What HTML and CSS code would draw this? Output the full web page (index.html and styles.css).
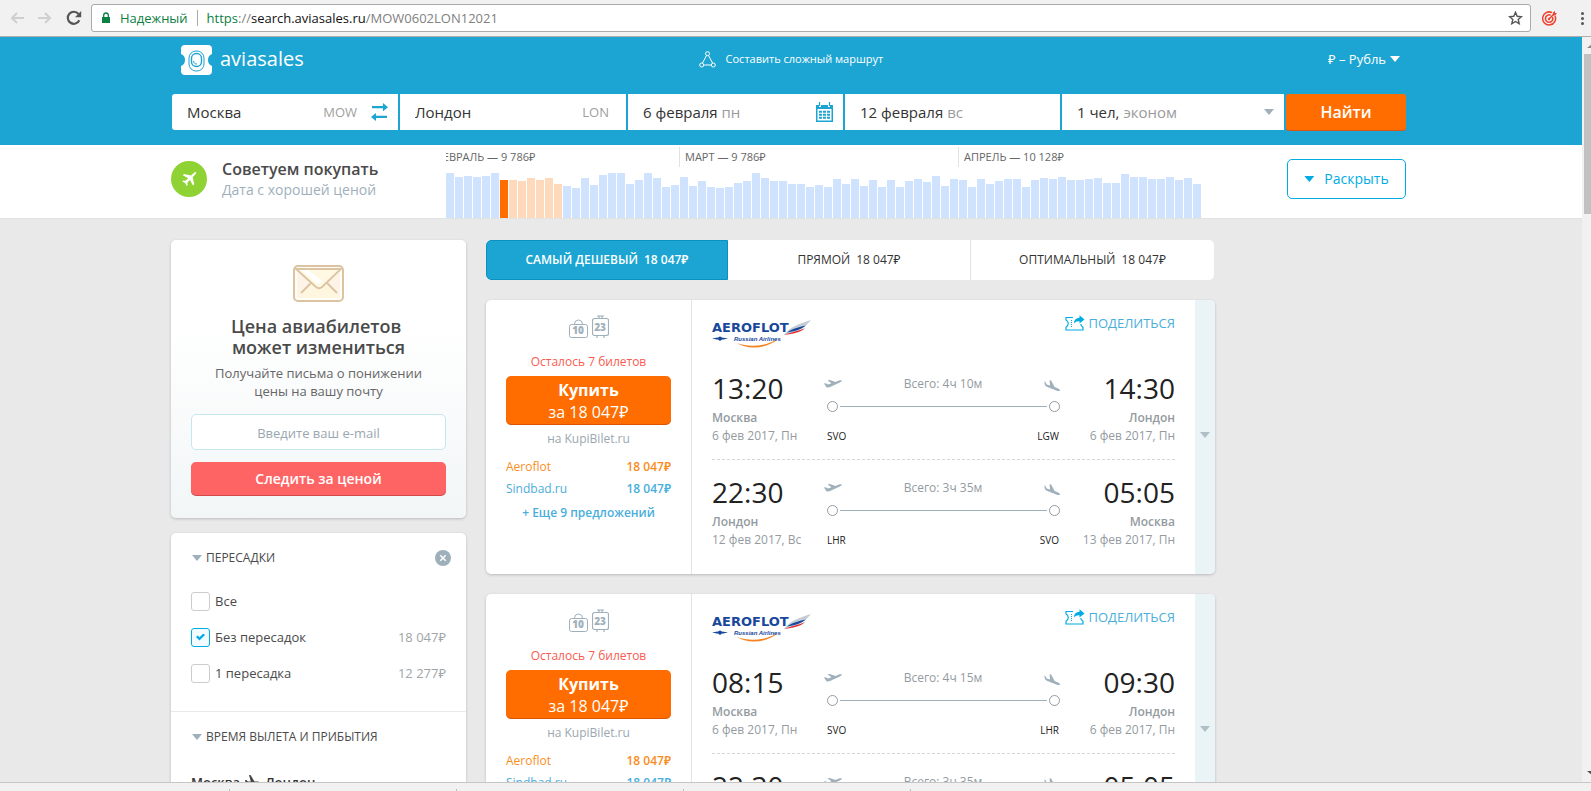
FILE: index.html
```html
<!DOCTYPE html>
<html lang="ru">
<head>
<meta charset="utf-8">
<title>Aviasales — Москва – Лондон</title>
<link rel="stylesheet" href="styles.css">
</head>
<body>
<svg class="sprite" aria-hidden="true">
  <symbol id="takeoff" viewBox="0 0 18 9"><path d="M0 3.500l1.500-.3 2.700 1.300 3.300-1.200L3.600.6 5.600 0l6 1.900 3.300-1.300c1.500-.6 3-.5 3.100.1.100.6-.9 1.200-2.200 1.700L5.500 7.200 2.600 7.500z"/></symbol>
  <symbol id="landing" viewBox="0 0 16 12"><path d="M.3 1.500l1.100.4 1.300 2.500 3.300 1.200L5.600 0l1.700.7 3.300 6.300 3 1.200c1.500.6 2.500 1.500 2.300 2.200-.2.700-1.600.7-2.900.3L2.800 6.700 1 5.200z"/></symbol>
  <symbol id="share" viewBox="0 0 20 16"><path d="M8 2.500H1V5c3 1.500 3 5.500 0 7.200V15h17v-2.800c-1.500-.8-2.200-2-2.200-3.200" fill="none" stroke="#00ace2" stroke-width="1.200"/><path d="M6.500 5v8" stroke="#00ace2" stroke-dasharray="1 1"/><path d="M9 8.500C9 5 11.300 3 14.500 2.800V.3l5 4.200-5 4.100V6.200C12 6 10.300 6.800 9 8.500z" fill="#00ace2"/></symbol>
  <symbol id="bag" viewBox="0 0 19 19"><path d="M2.500 5.500h14a2 2 0 0 1 2 2v9a2 2 0 0 1-2 2h-14a2 2 0 0 1-2-2v-9a2 2 0 0 1 2-2zM5.500 5a4 4 0 0 1 8 0" fill="none" stroke="#9fb0bb"/></symbol>
  <symbol id="case" viewBox="0 0 17 23"><path d="M2.500 3.500h12a2 2 0 0 1 2 2v13a2 2 0 0 1-2 2h-12a2 2 0 0 1-2-2v-13a2 2 0 0 1 2-2zM7 3V1M10 3V1M5 1h7M5 21v2M12 21v2" fill="none" stroke="#9fb0bb" stroke-width="1.200"/></symbol>
  <symbol id="wing" viewBox="0 0 100 28"><path d="M72 15C78 7 86 4 99 0 92 9 84 12 72 15z" fill="#c3ccd6"/><path d="M75 12.500C81 8 88 7 94 5.500c-5 4-12 6-19 7z" fill="#17489b"/><path d="M72 15c7-3 13-3.500 21-7-5 5-12 5.500-21 7z" fill="#e0292e"/><path d="M0 18c5 0 6-.5 8-1.500 2 1 3 1.500 8 1.500-3 1-4 1.500-6 1.500L8 21l-2-1.500C4 19.500 3 19 0 18z" fill="#17489b"/><path d="M25 23c13 5 29 3 41-4-11 10-31 11-41 4z" fill="#f58220"/></symbol>
</svg>

<header class="browser">
  <button class="nav" aria-label="Назад"><svg width="14" height="12" viewBox="0 0 14 12"><path d="M14 6H2M7 1L2 6l5 5" fill="none" stroke="#cfcfcf" stroke-width="2"/></svg></button>
  <button class="nav" aria-label="Вперёд"><svg width="14" height="12" viewBox="0 0 14 12"><path d="M0 6h12M7 1l5 5-5 5" fill="none" stroke="#cfcfcf" stroke-width="2"/></svg></button>
  <button class="nav" aria-label="Обновить"><svg width="16" height="16" viewBox="0 0 16 16"><path d="M13.300 10.200a6 6 0 1 1-.8-6.200" fill="none" stroke="#555" stroke-width="2.200"/><path d="M15.200 1v6.200H9z" fill="#555"/></svg></button>
  <div class="address">
    <svg width="8" height="12" viewBox="0 0 8 12"><path d="M0 5h8v6H0z" fill="#0b8043"/><path d="M1.700 5V3.300a2.300 2.300 0 0 1 4.600 0V5" fill="none" stroke="#0b8043" stroke-width="1.300"/></svg>
    <span class="secure">Надежный</span>
    <span class="url"><span class="scheme">https</span>://<b>search.aviasales.ru</b>/MOW0602LON12021</span>
    <button class="star" aria-label="Добавить в закладки"><svg width="15" height="14" viewBox="0 0 15 14"><path d="M7.500 1.300l1.700 4 4.300.4-3.300 2.800 1 4.200-3.700-2.200-3.700 2.200 1-4.200L1.500 5.700l4.300-.4z" fill="none" stroke="#555" stroke-width="1.400"/></svg></button>
  </div>
  <svg class="ext" width="15" height="15" viewBox="0 0 15 15"><g fill="none" stroke="#f0402f" stroke-width="1.500"><path d="M13 4.700A6.500 6.500 0 1 1 10 1.600"/><path d="M10.500 6A3.700 3.700 0 1 1 8.700 4.200M7 8l5-5"/></g><path d="M11 1.500L13 0v2l2 .3-2 2.200-2.300-.3z" fill="#f0402f"/><circle cx="7" cy="8" r="1.200" fill="#f0402f"/></svg>
  <button class="kebab" aria-label="Меню"><i></i><i></i><i></i></button>
</header>

<div class="window">
  <div class="page">
    <div class="top">
      <div class="topline">
        <a class="logo" href="#"><svg width="31" height="30" viewBox="0 0 31 30"><path d="M4 0h23a4 4 0 0 1 4 4v5a6.500 6.500 0 0 0 0 12v5a4 4 0 0 1-4 4H4a4 4 0 0 1-4-4v-5A6.500 6.500 0 0 0 0 9V4a4 4 0 0 1 4-4z" fill="#fff"/><rect x="8" y="6" width="15" height="20" rx="7" fill="none" stroke="#1ca5d2"/><rect x="10.500" y="8.500" width="10" height="13" rx="4.800" fill="none" stroke="#1ca5d2" stroke-width="1.400"/><path d="M12.500 16c.3 2 1.500 3 3.500 3" fill="none" stroke="#1ca5d2"/></svg><span>aviasales</span></a>
        <a class="complex" href="#"><svg width="17" height="17" viewBox="0 0 17 17" fill="none" stroke="#fff"><circle cx="8.500" cy="2.700" r="2"/><circle cx="2.700" cy="14" r="2"/><circle cx="14.300" cy="14" r="2"/><path d="M7.500 4.500l-4 7.500M9.500 4.500l4 7.500M4.700 14h7.600"/></svg>Составить сложный маршрут</a>
        <div class="currency"><select aria-label="Валюта"><option>₽ – Рубль</option></select><i class="caret"></i></div>
      </div>
      <form class="search">
        <div class="field"><input type="text" value="Москва" aria-label="Откуда"><span class="code">MOW</span><button type="button" class="swap" aria-label="Поменять местами"><svg width="17" height="18" viewBox="0 0 17 18" fill="#1ca5d2"><path d="M1 3h11V0l5 4.200-5 4V5.300H1zM16 12.700H5V10L0 14l5 4v-3h11z"/></svg></button></div>
        <div class="field"><input type="text" value="Лондон" aria-label="Куда"><span class="code">LON</span></div>
        <button type="button" class="field">6 февраля <span class="muted">пн</span><svg class="right" width="17" height="20" viewBox="0 0 17 20"><path d="M0 3h3v2h2V3h7v2h2V3h3v17H0z" fill="#1ca5d2"/><path d="M1.500 7h14v11.500h-14z" fill="#fff"/><path d="M3.500 0v4M13.500 0v4" stroke="#1ca5d2" stroke-width="1.200"/><path d="M3 9.700h11M3 12.700h11M3 15.700h11" stroke="#1ca5d2" stroke-width="2" stroke-dasharray="3 1"/></svg></button>
        <button type="button" class="field">12 февраля <span class="muted">вс</span></button>
        <button type="button" class="field">1 чел, <span class="muted">эконом</span><i class="caret grey right"></i></button>
        <button type="submit" class="find">Найти</button>
      </form>
    </div>

    <section class="prices">
      <div class="advice">
        <svg width="36" height="36" viewBox="0 0 36 36"><circle cx="18" cy="18" r="18" fill="#8fd233"/><path d="M23.700 11.200c1-.7 2 .4 1.300 1.300l-3.300 3.700 1.500 7-1.200 1.200-3-5.400-2.600 2.600.3 2.400-1 1-1.500-3-3-1.500 1-1 2.400.3 2.600-2.600-5.400-3 1.200-1.200 7 1.500z" fill="#fff"/></svg>
        <p><strong>Советуем покупать</strong><span>Дата с хорошей ценой</span></p>
      </div>
      <div class="chart">
        <div class="months"><span class="feb">ФЕВРАЛЬ — 9&nbsp;786₽</span><span class="mar">МАРТ — 9&nbsp;786₽</span><span class="apr">АПРЕЛЬ — 10&nbsp;128₽</span></div>
        <div class="bars" id="bars"></div>
      </div>
      <button class="expand"><i class="caret"></i>Раскрыть</button>
    </section>

    <div class="content">
      <aside>
        <form class="card subscribe">
          <svg width="51" height="38" viewBox="0 0 51 38"><rect x="1" y="1" width="49" height="35" rx="4" fill="#fffdf8" stroke="#dcc3a1" stroke-width="2"/><path d="M4 33V7l14 11zM47 33V7L33 18z" fill="#fdf3e6"/><path d="M4 33l14-14 8 5 8-5 13 14z" fill="#fff6df"/><path d="M8 28L18 18M44 28L34 18" stroke="#dcc3a1" stroke-width="1.800"/><path d="M3 4l20 18q3 2.500 6 0L48 4z" fill="#fff8e3" stroke="#dcc3a1" stroke-width="1.800"/><path d="M8 5l17 14 4-3L15 5z" fill="#fff"/></svg>
          <h2>Цена авиабилетов&nbsp;<br>может измениться</h2>
          <p>Получайте письма о понижении<br>цены на вашу почту</p>
          <input type="email" placeholder="Введите ваш e-mail" aria-label="E-mail">
          <button type="submit">Следить за ценой</button>
        </form>
        <section class="card filters">
          <fieldset aria-labelledby="stops">
            <div class="ftitle"><i class="caret grey"></i><span id="stops">ПЕРЕСАДКИ</span><button type="button" class="clear" aria-label="Сбросить"><svg width="16" height="16" viewBox="0 0 16 16"><circle cx="8" cy="8" r="8" fill="#9fb0bb"/><path d="M5.300 5.300l5.400 5.400M10.700 5.300l-5.400 5.400" stroke="#fff" stroke-width="1.500"/></svg></button></div>
            <label><input type="checkbox">Все</label>
            <label><input type="checkbox" checked>Без пересадок<span>18&nbsp;047₽</span></label>
            <label><input type="checkbox">1 пересадка<span>12&nbsp;277₽</span></label>
          </fieldset>
          <div class="times">
            <div class="ftitle"><i class="caret grey"></i>ВРЕМЯ ВЫЛЕТА И ПРИБЫТИЯ</div>
            <h3>Москва <svg width="15" height="14" viewBox="0 0 15 14"><path d="M0 5h1.500l1.300 1.500h3L4 0h1.500l4 6.500H13a1.200 1 0 0 1 0 2H9.500L5.500 14H4l1.800-5.500h-3L1.500 9.500H0l.6-2z" fill="#444"/></svg> Лондон</h3>
          </div>
        </section>
      </aside>

      <main>
        <nav class="tabs">
          <button class="active">САМЫЙ ДЕШЕВЫЙ<span>18&nbsp;047₽</span></button>
          <button>ПРЯМОЙ<span>18&nbsp;047₽</span></button>
          <button>ОПТИМАЛЬНЫЙ<span>18&nbsp;047₽</span></button>
        </nav>
        <div id="tickets" class="tickets"></div>
      </main>
    </div>
  </div>
  <div class="scrollbar"><i class="up"></i><i class="thumb"></i><i class="down"></i></div>
</div>
<footer class="shelf"><i></i><i></i><i></i><i></i></footer>
<script src="app.js"></script>
</body>
</html>
```

FILE: styles.css
```css
* { box-sizing: border-box; }
body { margin: 0; height: 100vh; overflow: hidden; display: flex; flex-direction: column; background: #e9e9e9; color: #333; font: 12px/18px "Open Sans", "Noto Sans", sans-serif; }
button, input, select { font: inherit; color: inherit; border: 0; background: none; padding: 0; margin: 0; }
h2, h3, p, fieldset { margin: 0; padding: 0; border: 0; }
a { color: inherit; text-decoration: none; }
svg { display: block; flex: none; }
.sprite { position: absolute; width: 0; height: 0; }

.browser { display: flex; align-items: center; flex: none; height: 37px; padding: 0 0 0 10px; background: #f1f1f1; border-bottom: 1px solid #aeaeae; }
.nav { width: 28px; height: 28px; display: flex; align-items: center; }
.nav:nth-child(3) { width: 25px; }
.address { flex: 1; display: flex; align-items: center; height: 28px; padding: 0 7px 0 10px; background: #fff; border: 1px solid #aaa; border-radius: 3px; font-size: 13px; }
.secure { margin-left: 10px; padding-right: 9px; border-right: 1px solid #aaa; line-height: 16px; color: #0b8043; }
.url { margin-left: 9px; flex: 1; color: #808080; }
.url b { font-weight: 400; color: #111; }
.scheme { color: #0b8043; }
.ext { margin-left: 11px; }
.kebab { display: grid; gap: 2px; margin-left: 24px; width: 10px; }
.kebab i { width: 3px; height: 3px; border-radius: 50%; background: #555; }

.window { flex: 1; min-height: 0; display: flex; }
.page { flex: 1; min-width: 0; overflow: hidden; }
.scrollbar { width: 9px; display: flex; flex-direction: column; background: #f1f1f1; overflow: hidden; }
.scrollbar i { flex: none; margin-left: 2px; }
.scrollbar .up, .scrollbar .down { width: 10px; margin-left: 5px; border: 5px solid transparent; }
.scrollbar .up { margin-top: 7px; border-top: 0; border-bottom: 4px solid #8a8a8a; }
.scrollbar .down { margin-top: auto; margin-bottom: 7px; border-bottom: 0; border-top: 4px solid #505050; }
.thumb { height: 160px; margin-top: 6px; background: #c1c1c1; }
.shelf { flex: none; height: 9px; display: flex; align-items: flex-end; padding-left: 229px; background: #f1f1f1; border-top: 1px solid #c6c6c6; }
.shelf i { width: 227px; height: 2px; border-left: 1px solid #bbb; }

.caret { display: inline-block; flex: none; width: 10px; height: 6px; background: currentColor; clip-path: polygon(0 0, 100% 0, 50% 100%); }
.grey { color: #9fb0bb; }
.right { margin-left: auto; }

.top { height: 108px; padding: 0 176px 0 172px; background: #1ca5d2; color: #fff; }
.topline { height: 57px; display: flex; align-items: center; justify-content: space-between; padding: 0 6px 13px 9px; }
.logo { display: flex; align-items: center; gap: 8px; padding-top: 1px; font-size: 20px; line-height: 26px; }
.logo span { padding-bottom: 2px; }
.complex { display: flex; align-items: center; gap: 10px; margin-left: 286px; font-size: 11px; }
.currency { display: flex; align-items: center; gap: 4px; margin-left: 336px; font-size: 13px; }
.currency select { appearance: none; }
.search { display: grid; grid-template-columns: 226fr 226fr 215fr 215fr 222fr 120fr; gap: 2px; }
.field { min-width: 0; height: 36px; display: flex; align-items: center; padding: 0 10px 0 15px; background: #fff; color: #333; font-size: 15px; line-height: 20px; white-space: pre; text-align: left; }
.field:first-child { border-radius: 3px 0 0 3px; }
.field input { flex: 1; min-width: 0; outline: 0; }
.field:nth-child(2) { padding-right: 17px; }
.code { color: #a0a0a0; font-size: 13px; }
.swap { margin-left: 14px; }
.muted { color: #9b9b9b; }
.find { height: 36px; background: #ff6d00; border-radius: 3px; box-shadow: 0 1px 0 #d5581a; color: #fff; font-size: 16px; font-weight: 600; }

.prices { height: 74px; display: flex; align-items: flex-start; padding: 0 176px 0 171px; background: #fff; border-bottom: 1px solid #e2e3e3; }
.advice { flex: 0 0 275px; display: flex; gap: 15px; padding-top: 16px; }
.advice strong, .advice span { display: block; font-size: 16px; font-weight: 600; line-height: 20px; color: #4a4a4a; white-space: nowrap; }
.advice p { margin-top: -2px; }
.advice span { font-size: 14px; line-height: 22px; font-weight: 400; color: #a0b0bb; }
.chart { flex: 1; max-width: 755px; height: 73px; display: flex; flex-direction: column; justify-content: space-between; overflow: hidden; }
.months { display: flex; margin: 2px 0 0 -19px; font-size: 11px; line-height: 20px; color: #666; white-space: nowrap; }
.months span { flex: none; padding-left: 5px; }
.months .feb { width: 252px; padding-left: 7px; }
.months .mar { width: 279px; border-left: 1px solid #e2e2e2; }
.months .apr { border-left: 1px solid #e2e2e2; }
.bars { height: 45px; display: flex; align-items: flex-end; gap: 1px; }
.bars i { flex: 1; background: #cfe3ff; }
.bars .near { background: #ffd9bc; }
.bars .day { background: #ff6d00; }
.expand { flex: none; width: 119px; height: 40px; margin: 14px 0 0 auto; display: flex; align-items: center; justify-content: center; gap: 10px; border: 1px solid #00ace2; border-radius: 5px; color: #00ace2; font-size: 14px; }

.content { display: flex; align-items: flex-start; gap: 20px; padding: 21px 0 0 171px; }
aside { flex: none; width: 295px; display: grid; gap: 15px; }
.card { background: #fff; border-radius: 5px; box-shadow: 0 1px 3px rgba(0, 0, 0, .2); }
.subscribe { display: flex; flex-direction: column; align-items: center; padding: 25px 20px 22px; background: linear-gradient(#fff 30%, #f2f6f7); text-align: center; }
.subscribe h2 { margin-top: 13px; font-size: 18px; line-height: 21px; font-weight: 600; color: #4a4a4a; }
.subscribe p { margin-top: 6px; font-size: 13px; color: #666; }
.subscribe input { width: 100%; height: 36px; margin-top: 14px; padding-top: 1px; background: #fff; border: 1px solid #c5e7f2; border-radius: 5px; text-align: center; font-size: 13px; }
.subscribe input::placeholder { color: #9aa7b0; opacity: 1; }
.subscribe button { width: 100%; height: 33px; margin: 12px 0 1px; background: #ff6464; border-radius: 5px; box-shadow: 0 1px 0 #d04a4a; color: #fff; font-size: 14px; font-weight: 600; }
fieldset { min-width: 0; padding: 0 20px 20px; border-bottom: 1px solid #e8eaea; }
.ftitle { display: flex; align-items: center; gap: 4px; height: 50px; font-size: 12px; color: #4a4a4a; }
.ftitle .caret { margin-left: 1px; }
.clear { margin: 0 -5px 0 auto; }
.filters label { display: flex; align-items: center; height: 36px; font-size: 13px; color: #4a4a4a; }
.filters label span { margin-left: auto; color: #a0a5a8; }
.filters input { appearance: none; width: 19px; height: 19px; margin-right: 5px; background: #fff; border: 1px solid #ccc; border-radius: 3px; display: grid; place-items: center; }
.filters input:checked { background: #f2fbff; border-color: #00ace2; }
.filters input:checked::before { content: ""; width: 9px; height: 7px; background: #00ace2; clip-path: polygon(0 50%, 20% 30%, 38% 52%, 82% 0, 100% 20%, 38% 100%); }
.times { padding: 0 20px; }
.times h3 { display: flex; gap: 5px; padding: 9px 0 20px; font-size: 13px; line-height: 22px; font-weight: 600; }
.times h3 svg { margin-top: 4px; }

main { flex: 0 1 729px; }
.tabs { display: grid; grid-template-columns: 242fr 243fr 243fr; height: 40px; margin-right: 1px; background: #fff; border-radius: 5px; overflow: hidden; }
.tabs button { border-right: 1px solid #e2e2e2; font-size: 12px; }
.tabs button:last-child { border: 0; }
.tabs .active { background: #1ca5d2; border: 1px solid #0b90c0; border-radius: 5px 0 0 5px; color: #fff; font-weight: 600; }
.tabs span { margin-left: 6px; }
.tickets { display: grid; gap: 20px; margin-top: 20px; }
.ticket { display: flex; height: 274px; overflow: hidden; }
.buy { flex: 0 0 206px; display: flex; flex-direction: column; align-items: center; padding: 15px 20px 0; border-right: 1px solid #e2e5e6; }
.bags { display: flex; align-items: flex-end; gap: 4px; height: 23px; }
.bags span { display: grid; place-items: center; color: #9fb0bb; font-size: 10px; line-height: 13px; font-weight: 700; }
.bags svg, .bags b { grid-area: 1 / 1; }
.bags span:first-child b { padding-top: 4px; }
.bags span:last-child b { padding-top: 1px; }
.left { margin-top: 15px; color: #f95b50; }
.buy button { width: 165px; height: 48px; margin-top: 5px; padding-top: 1px; background: #ff6d00; border-radius: 5px; box-shadow: 0 1px 0 #dd5500; color: #fff; font-size: 16px; line-height: 22px; }
.buy button b, .buy button span { display: block; }
.agency { margin-top: 6px; color: #9aa7b0; }
.offer { width: 165px; display: flex; justify-content: space-between; line-height: 22px; color: #4aaedb; }
.offer b { font-weight: 600; }
.agency + .offer { margin-top: 8px; color: #f98d1c; }
.more { margin-top: 4px; font-weight: 600; color: #4aaedb; }
.route { flex: 1; padding: 20px 20px 0; }
.rhead { display: flex; justify-content: space-between; height: 52px; }
.airline { display: grid; width: 100px; height: 28px; color: #17489b; }
.airline svg, .airline div { grid-area: 1 / 1; }
.airline b { display: block; padding-top: 1px; font: 700 13px/14px "DejaVu Sans", sans-serif; }
.airline em { display: block; padding-left: 22px; font: italic 700 6px/8px "Liberation Sans", sans-serif; }
.share { display: flex; align-items: center; gap: 3px; height: 18px; margin-top: -6px; color: #4aaedb; font-size: 13px; }
.leg { display: grid; grid-template-columns: 112px 1fr 115px; height: 104px; }
.leg:not(:last-child) { height: 88px; margin-bottom: 16px; border-bottom: 1px dashed #d4d8da; }
.leg time, .leg strong, .leg .date { display: block; color: #949b9f; }
.leg time { font-size: 28px; line-height: 32px; margin-bottom: 5px; color: #222; }
.leg strong { font-weight: 600; }
.to { text-align: right; }
.path { display: flex; flex-direction: column; padding-top: 3px; color: #949b9f; }
.path > div { display: flex; justify-content: space-between; }
.path svg { fill: #9fb0bb; margin-top: 5px; }
.path .line { align-items: center; gap: 2px; height: 11px; margin: 8px 0 0 3px; }
.line i { width: 11px; height: 11px; border: 1px solid #949b9f; border-radius: 50%; }
.line u { flex: 1; height: 1px; background: #9fb0bb; }
.path .codes { margin: 15px 1px 0 3px; font-size: 10px; color: #222; }
.open { flex: 0 0 20px; display: grid; place-items: center; padding-bottom: 4px; background: #eaf4f7; color: #b0bec6; }
```

FILE: app.js
```js
const heights = [45,41,42,41,42,45,38,38,37,40,38,40,34,32,30,40,33,43,45,45,34,38,45,40,31,33,41,32,37,31,30,31,35,37,45,40,37,37,34,34,31,33,31,39,34,39,32,38,31,38,31,37,39,36,42,32,39,38,31,39,34,37,39,39,31,38,40,39,41,38,38,39,40,35,35,44,41,41,39,39,41,38,40,34];
document.getElementById("bars").innerHTML = heights.map((h, i) =>
  `<i class="${i === 6 ? "day" : i > 6 && i < 13 ? "near" : ""}" style="height:${h}px"></i>`).join("");

const price = "18\u00a0047₽";
const leg = (t1, c1, d1, a1, total, t2, c2, d2, a2) => `
  <div class="leg">
    <div><time>${t1}</time><strong>${c1}</strong><span class="date">${d1}</span></div>
    <div class="path">
      <div><svg width="18" height="9"><use href="#takeoff"/></svg><span>Всего: ${total}</span><svg width="16" height="12"><use href="#landing"/></svg></div>
      <div class="line"><i></i><u></u><i></i></div>
      <div class="codes"><span>${a1}</span><span>${a2}</span></div>
    </div>
    <div class="to"><time>${t2}</time><strong>${c2}</strong><span class="date">${d2}</span></div>
  </div>`;
const ticket = legs => `
  <article class="card ticket">
    <div class="buy">
      <div class="bags"><span><svg width="19" height="19"><use href="#bag"/></svg><b>10</b></span><span><svg width="17" height="23"><use href="#case"/></svg><b>23</b></span></div>
      <div class="left">Осталось 7 билетов</div>
      <button><b>Купить</b><span>за ${price}</span></button>
      <div class="agency">на KupiBilet.ru</div>
      <a class="offer" href="#">Aeroflot<b>${price}</b></a>
      <a class="offer" href="#">Sindbad.ru<b>${price}</b></a>
      <a class="more" href="#">+ Еще 9 предложений</a>
    </div>
    <div class="route">
      <div class="rhead">
        <div class="airline"><svg width="100" height="28"><use href="#wing"/></svg><div><b>AEROFLOT</b><em>Russian Airlines</em></div></div>
        <a class="share" href="#"><svg width="20" height="16"><use href="#share"/></svg>ПОДЕЛИТЬСЯ</a>
      </div>
      ${legs.join("")}
    </div>
    <button class="open" aria-label="Подробнее"><i class="caret"></i></button>
  </article>`;
document.getElementById("tickets").innerHTML = [
  [leg("13:20", "Москва", "6 фев 2017, Пн", "SVO", "4ч 10м", "14:30", "Лондон", "6 фев 2017, Пн", "LGW"),
   leg("22:30", "Лондон", "12 фев 2017, Вс", "LHR", "3ч 35м", "05:05", "Москва", "13 фев 2017, Пн", "SVO")],
  [leg("08:15", "Москва", "6 фев 2017, Пн", "SVO", "4ч 15м", "09:30", "Лондон", "6 фев 2017, Пн", "LHR"),
   leg("22:30", "Лондон", "12 фев 2017, Вс", "LHR", "3ч 35м", "05:05", "Москва", "13 фев 2017, Пн", "SVO")]
].map(ticket).join("");
```
